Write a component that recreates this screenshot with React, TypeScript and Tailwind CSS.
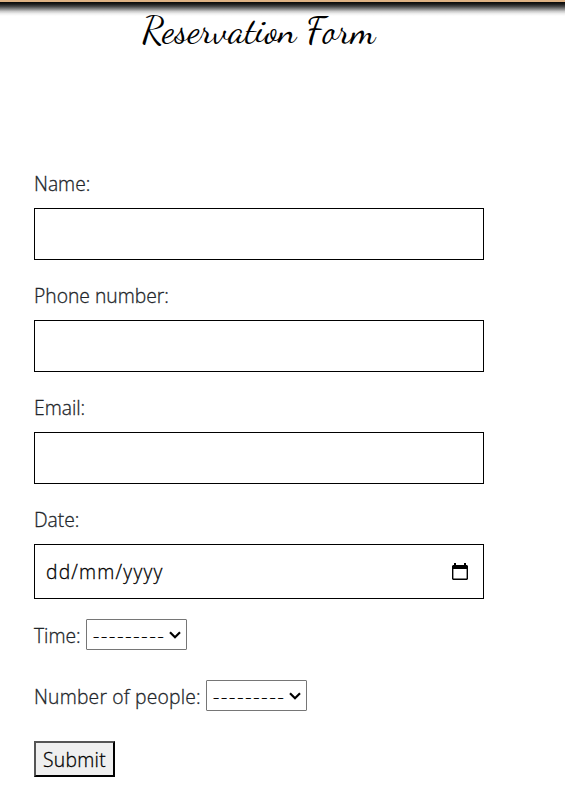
import React from "react";

function TextField({ label, name, type }: { label: string; name: string; type: string }) {
  return (
    <div className="mb-5">
      <label htmlFor={name} className="block h-[30px] leading-[32px]">{label}</label>
      <input id={name} name={name} type={type} className="mt-[10px] block h-[52px] w-[450px] border border-black bg-white px-[11px] text-black outline-none" />
    </div>
  );
}

function DashSelect({ id }: { id: string }) {
  return (
    <div className="grid h-[31px] w-[101px] rounded-[1px] border border-[#767676] bg-white">
      <select id={id} className="col-start-1 row-start-1 h-[29px] w-full appearance-none bg-transparent pl-[6px] pt-[2px] tracking-[1.85px] text-black outline-none">
        <option>---------</option>
      </select>
      <svg viewBox="0 0 12 8" className="pointer-events-none col-start-1 row-start-1 mr-[5px] h-2 w-3 self-center justify-self-end" fill="none" stroke="#000" strokeWidth="2.2">
        <path d="M1 1.3 6 6.2l5-4.9" />
      </svg>
    </div>
  );
}

export default function App() {
  return (
    <div className="h-[802px] w-[565px] overflow-hidden bg-white font-['Segoe_UI','Open_Sans',sans-serif] text-[19.3px] font-light tracking-[0px] text-[#212529] [-webkit-text-stroke:0.3px]">
      <div className="h-[2px] bg-[#deb284]" />
      <div className="h-[14px] bg-[linear-gradient(to_bottom,#080808_0%,#1c1c1c_15%,#484848_32%,#888_50%,#ccc_68%,#f0f0f0_84%,#fff_100%)]" />
      <h1 className="-mt-[10px] ml-[142px] h-[50px] whitespace-nowrap font-['Dancing_Script',cursive] text-[37.6px] font-normal leading-[49px] tracking-normal text-black [-webkit-text-stroke:0px]">
        Reservation Form
      </h1>
      <form className="ml-[34px] mt-[112px]" onSubmit={(e) => e.preventDefault()}>
        <TextField label="Name:" name="name" type="text" />
        <TextField label="Phone number:" name="phone" type="tel" />
        <TextField label="Email:" name="email" type="email" />
        <label htmlFor="date" className="block h-[30px] leading-[32px]">Date:</label>
        <div className="mt-[10px] flex h-[55px] w-[450px] items-center justify-between border border-black pl-[11px] pr-[15px] text-black">
          <input id="date" type="text" defaultValue="dd/mm/yyyy" className="w-[200px] bg-transparent pt-[2px] tracking-[1.2px] outline-none" />
          <svg viewBox="0 0 16 18" className="h-[18px] w-4">
            <path d="M2 0h2v2h8V0h2v2h1l1 1v13l-1 1H1l-1-1V3l1-1h1zM1.4 6v9.6h13.2V6z" fill="#000" fillRule="evenodd" />
          </svg>
        </div>
        <div className="mt-5 flex h-[31px]">
          <label htmlFor="time" className="w-[52px] whitespace-nowrap leading-[34px]">Time:</label>
          <DashSelect id="time" />
        </div>
        <div className="mt-[30px] flex h-[31px]">
          <label htmlFor="people" className="w-[172px] whitespace-nowrap leading-[34px] tracking-[0.2px]">Number of people:</label>
          <DashSelect id="people" />
        </div>
        <button type="submit" className="mt-[30px] flex h-9 w-[81px] items-center justify-center border-2 border-b-black border-l-[#555] border-r-black border-t-[#555] bg-[#efefef] pt-[2px] tracking-[0.3px] text-black">Submit</button>
      </form>
    </div>
  );
}
